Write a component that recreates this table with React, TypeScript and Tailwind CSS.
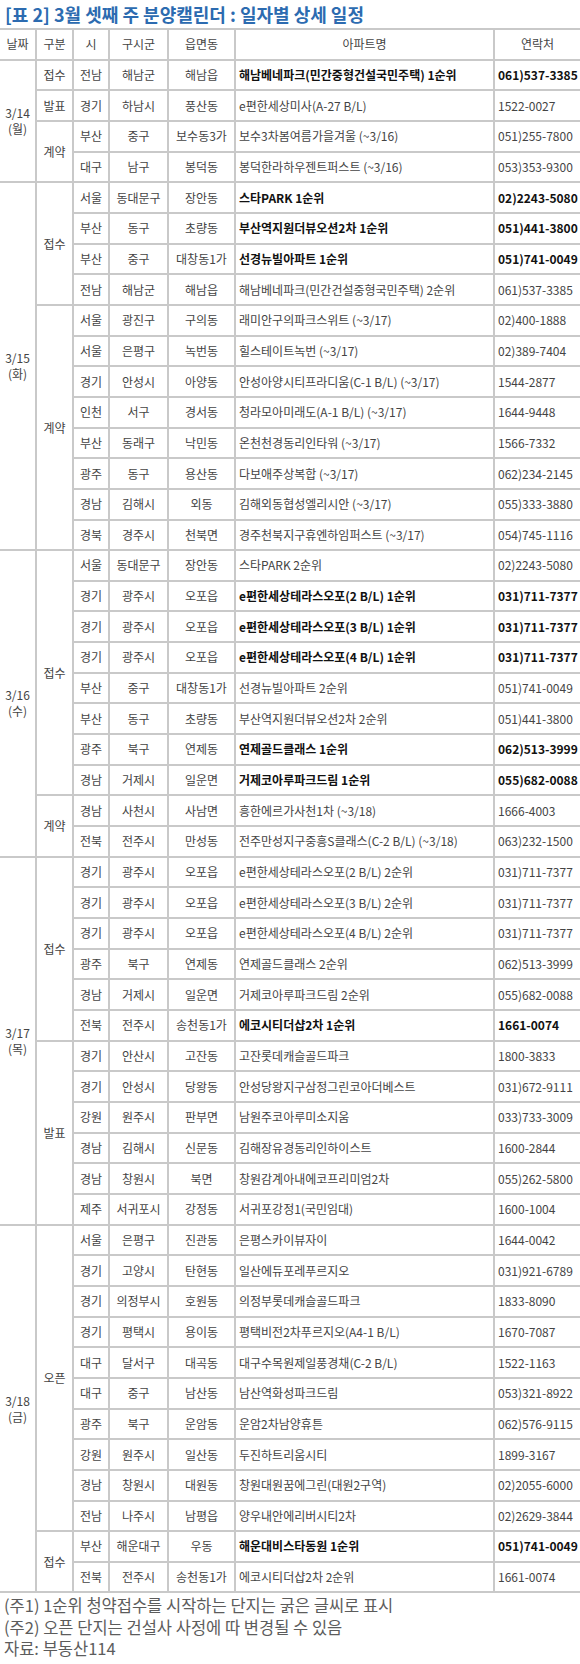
type Row = [string, string, string, string, string, boolean?];

interface Category {
  name: string;
  rows: Row[];
}

interface DayGroup {
  date: string;
  day: string;
  cats: Category[];
}

const spanClass: Record<number, string> = {
  1: "row-span-1",
  2: "row-span-2",
  4: "row-span-4",
  6: "row-span-6",
  8: "row-span-8",
  10: "row-span-10",
  12: "row-span-12",
};

const days: DayGroup[] = [
  {
    date: "3/14",
    day: "(월)",
    cats: [
      { name: "접수", rows: [["전남", "해남군", "해남읍", "해남베네파크(민간중형건설국민주택) 1순위", "061)537-3385", true]] },
      { name: "발표", rows: [["경기", "하남시", "풍산동", "e편한세상미사(A-27 B/L)", "1522-0027"]] },
      {
        name: "계약",
        rows: [
          ["부산", "중구", "보수동3가", "보수3차봄여름가을겨울 (~3/16)", "051)255-7800"],
          ["대구", "남구", "봉덕동", "봉덕한라하우젠트퍼스트 (~3/16)", "053)353-9300"],
        ],
      },
    ],
  },
  {
    date: "3/15",
    day: "(화)",
    cats: [
      {
        name: "접수",
        rows: [
          ["서울", "동대문구", "장안동", "스타PARK 1순위", "02)2243-5080", true],
          ["부산", "동구", "초량동", "부산역지원더뷰오션2차 1순위", "051)441-3800", true],
          ["부산", "중구", "대창동1가", "선경뉴빌아파트 1순위", "051)741-0049", true],
          ["전남", "해남군", "해남읍", "해남베네파크(민간건설중형국민주택) 2순위", "061)537-3385"],
        ],
      },
      {
        name: "계약",
        rows: [
          ["서울", "광진구", "구의동", "래미안구의파크스위트 (~3/17)", "02)400-1888"],
          ["서울", "은평구", "녹번동", "힐스테이트녹번 (~3/17)", "02)389-7404"],
          ["경기", "안성시", "아양동", "안성아양시티프라디움(C-1 B/L) (~3/17)", "1544-2877"],
          ["인천", "서구", "경서동", "청라모아미래도(A-1 B/L) (~3/17)", "1644-9448"],
          ["부산", "동래구", "낙민동", "온천천경동리인타워 (~3/17)", "1566-7332"],
          ["광주", "동구", "용산동", "다보애주상복합 (~3/17)", "062)234-2145"],
          ["경남", "김해시", "외동", "김해외동협성엘리시안 (~3/17)", "055)333-3880"],
          ["경북", "경주시", "천북면", "경주천북지구휴엔하임퍼스트 (~3/17)", "054)745-1116"],
        ],
      },
    ],
  },
  {
    date: "3/16",
    day: "(수)",
    cats: [
      {
        name: "접수",
        rows: [
          ["서울", "동대문구", "장안동", "스타PARK 2순위", "02)2243-5080"],
          ["경기", "광주시", "오포읍", "e편한세상테라스오포(2 B/L) 1순위", "031)711-7377", true],
          ["경기", "광주시", "오포읍", "e편한세상테라스오포(3 B/L) 1순위", "031)711-7377", true],
          ["경기", "광주시", "오포읍", "e편한세상테라스오포(4 B/L) 1순위", "031)711-7377", true],
          ["부산", "중구", "대창동1가", "선경뉴빌아파트 2순위", "051)741-0049"],
          ["부산", "동구", "초량동", "부산역지원더뷰오션2차 2순위", "051)441-3800"],
          ["광주", "북구", "연제동", "연제골드클래스 1순위", "062)513-3999", true],
          ["경남", "거제시", "일운면", "거제코아루파크드림 1순위", "055)682-0088", true],
        ],
      },
      {
        name: "계약",
        rows: [
          ["경남", "사천시", "사남면", "흥한에르가사천1차 (~3/18)", "1666-4003"],
          ["전북", "전주시", "만성동", "전주만성지구중흥S클래스(C-2 B/L) (~3/18)", "063)232-1500"],
        ],
      },
    ],
  },
  {
    date: "3/17",
    day: "(목)",
    cats: [
      {
        name: "접수",
        rows: [
          ["경기", "광주시", "오포읍", "e편한세상테라스오포(2 B/L) 2순위", "031)711-7377"],
          ["경기", "광주시", "오포읍", "e편한세상테라스오포(3 B/L) 2순위", "031)711-7377"],
          ["경기", "광주시", "오포읍", "e편한세상테라스오포(4 B/L) 2순위", "031)711-7377"],
          ["광주", "북구", "연제동", "연제골드클래스 2순위", "062)513-3999"],
          ["경남", "거제시", "일운면", "거제코아루파크드림 2순위", "055)682-0088"],
          ["전북", "전주시", "송천동1가", "에코시티더샵2차 1순위", "1661-0074", true],
        ],
      },
      {
        name: "발표",
        rows: [
          ["경기", "안산시", "고잔동", "고잔롯데캐슬골드파크", "1800-3833"],
          ["경기", "안성시", "당왕동", "안성당왕지구삼정그린코아더베스트", "031)672-9111"],
          ["강원", "원주시", "판부면", "남원주코아루미소지움", "033)733-3009"],
          ["경남", "김해시", "신문동", "김해장유경동리인하이스트", "1600-2844"],
          ["경남", "창원시", "북면", "창원감계아내에코프리미엄2차", "055)262-5800"],
          ["제주", "서귀포시", "강정동", "서귀포강정1(국민임대)", "1600-1004"],
        ],
      },
    ],
  },
  {
    date: "3/18",
    day: "(금)",
    cats: [
      {
        name: "오픈",
        rows: [
          ["서울", "은평구", "진관동", "은평스카이뷰자이", "1644-0042"],
          ["경기", "고양시", "탄현동", "일산에듀포레푸르지오", "031)921-6789"],
          ["경기", "의정부시", "호원동", "의정부롯데캐슬골드파크", "1833-8090"],
          ["경기", "평택시", "용이동", "평택비전2차푸르지오(A4-1 B/L)", "1670-7087"],
          ["대구", "달서구", "대곡동", "대구수목원제일풍경채(C-2 B/L)", "1522-1163"],
          ["대구", "중구", "남산동", "남산역화성파크드림", "053)321-8922"],
          ["광주", "북구", "운암동", "운암2차남양휴튼", "062)576-9115"],
          ["강원", "원주시", "일산동", "두진하트리움시티", "1899-3167"],
          ["경남", "창원시", "대원동", "창원대원꿈에그린(대원2구역)", "02)2055-6000"],
          ["전남", "나주시", "남평읍", "양우내안에리버시티2차", "02)2629-3844"],
        ],
      },
      {
        name: "접수",
        rows: [
          ["부산", "해운대구", "우동", "해운대비스타동원 1순위", "051)741-0049", true],
          ["전북", "전주시", "송천동1가", "에코시티더샵2차 2순위", "1661-0074"],
        ],
      },
    ],
  },
];

const headers = ["날짜", "구분", "시", "구시군", "읍면동", "아파트명", "연락처"];

const center = "bg-white flex items-center justify-center text-center whitespace-nowrap";
const left = "bg-white flex items-center pl-[3px] whitespace-nowrap overflow-hidden";

export default function App() {
  const cells: React.ReactNode[] = [];

  days.forEach((d) => {
    const total = d.cats.reduce((n, c) => n + c.rows.length, 0);
    d.cats.forEach((c, ci) => {
      c.rows.forEach((r, ri) => {
        const key = `${d.date}-${ci}-${ri}`;
        if (ci === 0 && ri === 0) {
          cells.push(
            <div key={key + "-d"} className={`${center} ${spanClass[total]} flex-col leading-[16px] text-[#444]`}>
              <span>{d.date}</span>
              <span>{d.day}</span>
            </div>
          );
        }
        if (ri === 0) {
          cells.push(
            <div key={key + "-c"} className={`${center} ${spanClass[c.rows.length]} text-[#444]`}>
              {c.name}
            </div>
          );
        }
        const bold = r[5] ? "font-bold text-[#111]" : "text-[#444]";
        cells.push(
          <div key={key + "-1"} className={`${center} text-[#444]`}>{r[0]}</div>,
          <div key={key + "-2"} className={`${center} text-[#444]`}>{r[1]}</div>,
          <div key={key + "-3"} className={`${center} text-[#444]`}>{r[2]}</div>,
          <div key={key + "-4"} className={`${left} ${bold}`}>{r[3]}</div>,
          <div key={key + "-5"} className={`${left} ${bold}`}>{r[4]}</div>
        );
      });
    });
  });

  return (
    <div
      className="w-[580px] bg-white"
      style={{ fontFamily: '"Noto Sans CJK KR", "Noto Sans", sans-serif' }}
    >
      <h1 className="h-[28px] pl-[5px] text-[18px] font-bold leading-[28px] text-[#2c6bb0] whitespace-nowrap">
        [표 2] 3월 셋째 주 분양캘린더 : 일자별 상세 일정
      </h1>

      <div className="grid grid-cols-[35px_35px_34px_57px_65px_257px_1fr] auto-rows-[28.66px] gap-[2px] bg-[#c9c9c9] py-[2px] text-[12px]">
        {headers.map((h) => (
          <div key={h} className={`${center} text-[#444]`}>
            {h}
          </div>
        ))}
        {cells}
      </div>

      <div className="pl-[4px] pt-[2px] text-[16.5px] leading-[21.5px] text-[#5c5c5c]">
        <p>(주1) 1순위 청약접수를 시작하는 단지는 굵은 글씨로 표시</p>
        <p>(주2) 오픈 단지는 건설사 사정에 따 변경될 수 있음</p>
        <p>자료: 부동산114</p>
      </div>
    </div>
  );
}
